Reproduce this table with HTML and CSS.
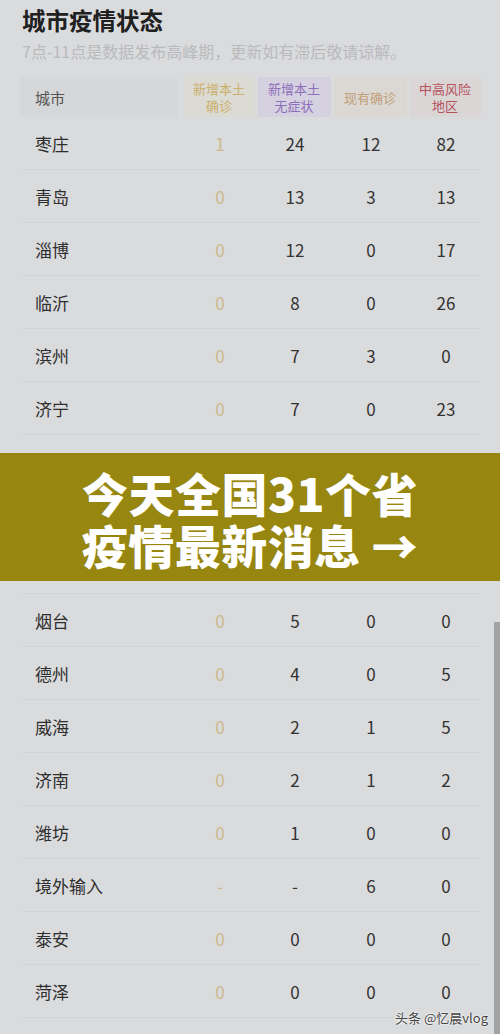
FILE: index.html
```html
<!DOCTYPE html>
<html lang="zh-CN">
<head>
    <meta charset="UTF-8">
    <meta name="viewport" content="width=device-width, initial-scale=1.0">
    <title>城市疫情状态</title>
    <link rel="stylesheet" href="styles.css">
</head>
<body>
    <div class="page">
        <h1 class="title">城市疫情状态</h1>
        <p class="sub">7点-11点是数据发布高峰期，更新如有滞后敬请谅解。</p>

        <div class="table">
            <div class="head">
                <div class="hcell city-h">城市</div>
                <div class="hcell h-new">新增本土<br>确诊</div>
                <div class="hcell h-asym">新增本土<br>无症状</div>
                <div class="hcell h-now">现有确诊</div>
                <div class="hcell h-risk">中高风险<br>地区</div>
            </div>
            <div class="row"><span class="city">枣庄</span><span class="n gold">1</span><span class="n">24</span><span class="n">12</span><span class="n">82</span></div>
            <div class="row"><span class="city">青岛</span><span class="n gold">0</span><span class="n">13</span><span class="n">3</span><span class="n">13</span></div>
            <div class="row"><span class="city">淄博</span><span class="n gold">0</span><span class="n">12</span><span class="n">0</span><span class="n">17</span></div>
            <div class="row"><span class="city">临沂</span><span class="n gold">0</span><span class="n">8</span><span class="n">0</span><span class="n">26</span></div>
            <div class="row"><span class="city">滨州</span><span class="n gold">0</span><span class="n">7</span><span class="n">3</span><span class="n">0</span></div>
            <div class="row"><span class="city">济宁</span><span class="n gold">0</span><span class="n">7</span><span class="n">0</span><span class="n">23</span></div>
            <!-- rows under the banner -->
            <div class="row"></div>
            <div class="row"></div>
            <div class="row"></div>
            <div class="row"><span class="city">烟台</span><span class="n gold">0</span><span class="n">5</span><span class="n">0</span><span class="n">0</span></div>
            <div class="row"><span class="city">德州</span><span class="n gold">0</span><span class="n">4</span><span class="n">0</span><span class="n">5</span></div>
            <div class="row"><span class="city">威海</span><span class="n gold">0</span><span class="n">2</span><span class="n">1</span><span class="n">5</span></div>
            <div class="row"><span class="city">济南</span><span class="n gold">0</span><span class="n">2</span><span class="n">1</span><span class="n">2</span></div>
            <div class="row"><span class="city">潍坊</span><span class="n gold">0</span><span class="n">1</span><span class="n">0</span><span class="n">0</span></div>
            <div class="row"><span class="city">境外输入</span><span class="n gold">-</span><span class="n">-</span><span class="n">6</span><span class="n">0</span></div>
            <div class="row"><span class="city">泰安</span><span class="n gold">0</span><span class="n">0</span><span class="n">0</span><span class="n">0</span></div>
            <div class="row"><span class="city">菏泽</span><span class="n gold">0</span><span class="n">0</span><span class="n">0</span><span class="n">0</span></div>
        </div>
    </div>

    <div class="banner">
        <div class="banner-line">今天全国31个省</div>
        <div class="banner-line">疫情最新消息 →</div>
    </div>

    <div class="scrollbar"></div>
    <div class="mark">头条 @忆晨vlog</div>
</body>
</html>
```

FILE: styles.css
```css
body {
    margin: 0;
    background: #dadbdd;
    font-family: "Noto Sans CJK SC", "Noto Sans", sans-serif;
    color: #2b2b2b;
    height: 1034px;
    overflow: hidden;
    position: relative;
}
.page {
    padding: 0 20px 0 20px;
}
.title {
    margin: 0;
    padding: 5px 0 0 2px;
    font-size: 23.5px;
    line-height: 30px;
    font-weight: 700;
    color: #202020;
}
.sub {
    margin: 0;
    padding: 6px 0 0 2px;
    font-size: 16px;
    line-height: 20px;
    color: #b9babc;
}
.table {
    margin-top: 16px;
}
.head {
    display: grid;
    grid-template-columns: 162px 74px 76px 76px 74px;
    height: 40px;
    margin-bottom: 0;
}
.hcell {
    display: flex;
    align-items: center;
    justify-content: center;
    text-align: center;
    font-size: 13px;
    line-height: 17px;
    margin: 0 1.5px;
}
.city-h {
    justify-content: flex-start;
    padding-left: 15px;
    margin-left: 0;
    margin-right: 4px;
    font-size: 15px;
    color: #555;
    background: #d5d7d8;
}
.h-new {
    background: #dbdad3;
    color: #ccb16d;
}
.h-asym {
    background: #d5d1e1;
    color: #8e6fb9;
}
.h-now {
    background: #dbd8d3;
    color: #c29e78;
}
.h-risk {
    background: #dad6d6;
    color: #b5525c;
}
.row {
    display: grid;
    grid-template-columns: 162px 74px 76px 76px 74px;
    align-items: center;
    height: 52px;
    border-bottom: 1px solid #d1d3d5;
    margin-left: 2px;
}
.city {
    padding-left: 13px;
    font-size: 17px;
    color: #2e2e2e;
}
.n {
    text-align: center;
    font-size: 17px;
    color: #333;
    margin-left: -2px;
}
.n.gold {
    color: #cdb98c;
}
.banner {
    position: absolute;
    left: 0;
    right: 0;
    top: 453px;
    height: 128px;
    background: #97860f;
    display: flex;
    flex-direction: column;
    align-items: center;
    justify-content: center;
    padding-top: 2px;
    box-sizing: border-box;
}
.banner-line {
    color: #fff;
    font-size: 46px;
    line-height: 52px;
    font-weight: 900;
    letter-spacing: 0.5px;
}
.scrollbar {
    position: absolute;
    right: 0;
    top: 622px;
    bottom: 0;
    width: 6px;
    background: #a2a3a5;
}
.mark {
    position: absolute;
    right: 12px;
    bottom: 7px;
    font-size: 13px;
    color: #444;
    text-shadow: 0 0 2px #fff, 0 0 2px #fff;
}
```
